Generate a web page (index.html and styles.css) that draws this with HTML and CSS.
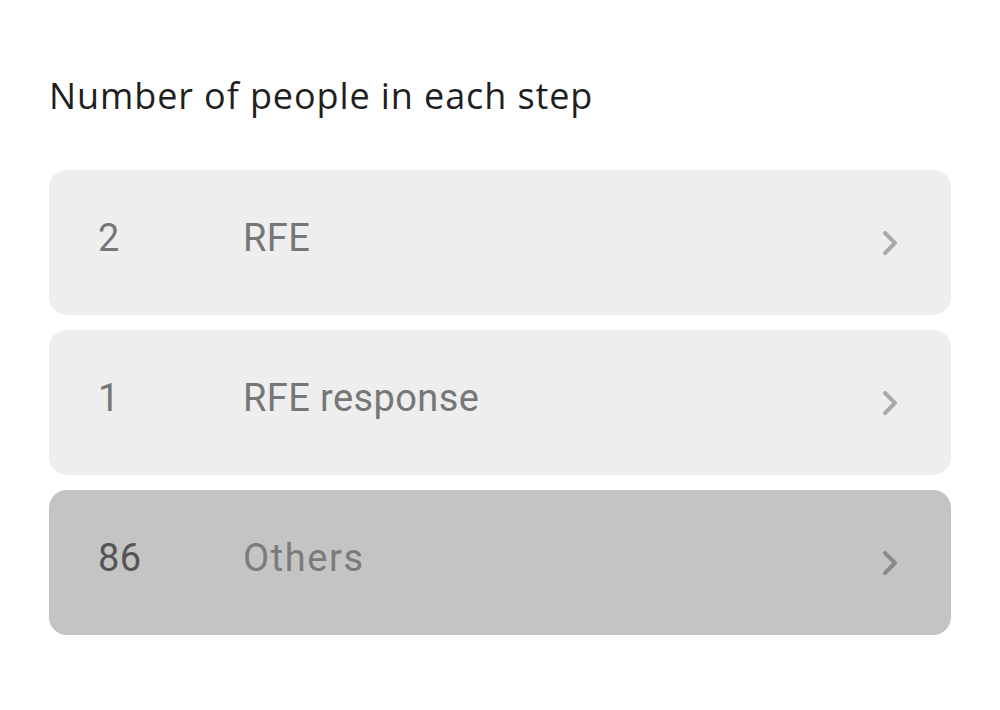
FILE: index.html
```html
<!DOCTYPE html>
<html lang="en">
<head>
    <meta charset="UTF-8" />
    <title>Number of people in each step</title>
    <link rel="stylesheet" href="styles.css">
</head>
<body>
    <div class="panel">
        <h2 class="title">Number of people in each step</h2>
        <ul class="steps">
            <li class="step">
                <span class="count">2</span>
                <span class="label">RFE</span>
                <svg class="chevron" width="18" height="28" viewBox="0 0 18 28"><path d="M4 4l10 10-10 10" fill="none" stroke="currentColor" stroke-width="4" stroke-linecap="round" stroke-linejoin="round"/></svg>
            </li>
            <li class="step">
                <span class="count">1</span>
                <span class="label">RFE response</span>
                <svg class="chevron" width="18" height="28" viewBox="0 0 18 28"><path d="M4 4l10 10-10 10" fill="none" stroke="currentColor" stroke-width="4" stroke-linecap="round" stroke-linejoin="round"/></svg>
            </li>
            <li class="step others">
                <span class="count">86</span>
                <span class="label">Others</span>
                <svg class="chevron" width="18" height="28" viewBox="0 0 18 28"><path d="M4 4l10 10-10 10" fill="none" stroke="currentColor" stroke-width="4" stroke-linecap="round" stroke-linejoin="round"/></svg>
            </li>
        </ul>
    </div>
</body>
</html>
```

FILE: styles.css
```css
body {
    margin: 0;
    background: #ffffff;
    font-family: "Open Sans", Arial, sans-serif;
}

.panel {
    padding: 68px 49px 0 49px;
}

.title {
    margin: 0 0 46px 0;
    font-size: 36px;
    font-weight: 400;
    letter-spacing: 0.9px;
    color: #1f1f1f;
    line-height: 56px;
}

.steps {
    list-style: none;
    margin: 0;
    padding: 0;
    display: flex;
    flex-direction: column;
    gap: 15px;
}

.step {
    display: flex;
    align-items: center;
    height: 145px;
    background: #eeeeee;
    border-radius: 18px;
    padding: 0 52px 0 49px;
    font-family: Roboto, Arial, sans-serif;
    font-size: 38px;
    letter-spacing: 0.4px;
    color: #777777;
}

.count {
    width: 145px;
    margin-top: -10px;
}

.label {
    flex: 1;
    margin-top: -10px;
}

.chevron {
    color: #a9a9a9;
}

.others {
    background: #c4c4c4;
}

.others .count {
    color: #555555;
}

.others .label {
    color: #7b7b7b;
    letter-spacing: 1.6px;
}

.others .chevron {
    color: #8a8a8a;
}
```
